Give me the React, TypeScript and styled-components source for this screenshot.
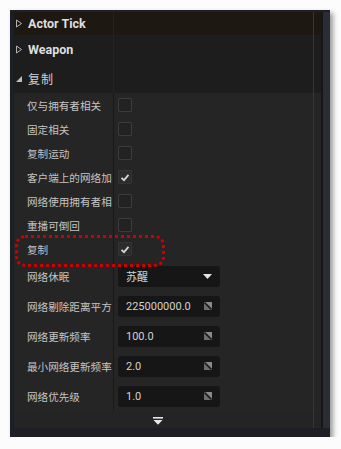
import React from 'react';
import styled, { createGlobalStyle, css } from 'styled-components';

const Global = createGlobalStyle`
  html, body { margin: 0; padding: 0; background: #fdfcfd; }
  body { font-family: "Roboto", "Noto Sans CJK SC", sans-serif; }
`;

// 分隔線 (label | value | scroll)
const dividers = (left: string) => css`
  background-image: linear-gradient(
    to right,
    transparent 99px, ${left} 99px, ${left} 100px, transparent 100px,
    transparent 299px, #363636 299px, #363636 300px, transparent 300px
  );
`;

const Page = styled.div`
  padding: 10px 0 0 10px;
`;

const Panel = styled.div`
  width: 320px;
  height: 427px;
  box-sizing: border-box;
  display: flex;
  border-left: 4px solid #1b1f27;
  border-top: 2px solid #1d2028;
  border-bottom: 9px solid #1d1f25;
  box-shadow: 3px 3px 5px rgba(0, 0, 0, 0.4);
  background: #252525;
`;

const Content = styled.div`
  flex: 1;
  display: flex;
  flex-direction: column;
  min-width: 0;
`;

const ScrollStrip = styled.div`
  width: 7px;
  border-left: 2px solid #141619;
  background: #2a2d35;
`;

const Category = styled.div<{ h: number; tone: 'hover' | 'plain' }>`
  height: ${(p) => p.h}px;
  display: flex;
  align-items: center;
  gap: 5px;
  padding-left: 1px;
  box-sizing: border-box;
  background-color: ${(p) => (p.tone === 'hover' ? '#1e1813' : '#1d1d1d')};
  ${dividers('#232323')}
`;

const CatTitle = styled.span<{ bold?: boolean }>`
  font-size: ${(p) => (p.bold ? '12.5px' : '12px')};
  font-weight: ${(p) => (p.bold ? 700 : 400)};
  color: ${(p) => (p.bold ? '#dedede' : '#d0d0d0')};
  letter-spacing: ${(p) => (p.bold ? '0' : '1px')};
`;

const PropRow = styled.div<{ h: number }>`
  position: relative;
  height: ${(p) => p.h}px;
  display: flex;
  align-items: center;
  background-color: #252525;
  ${dividers('#191919')}
`;

const Label = styled.div`
  width: 99px;
  flex: none;
  box-sizing: border-box;
  padding-left: 13px;
  font-size: 10.6px;
  color: #c4c4c4;
  white-space: nowrap;
  overflow: hidden;
`;

const Value = styled.div`
  flex: 1;
  display: flex;
  align-items: center;
  padding-left: 5px;
`;

const Check = styled.div<{ checked?: boolean }>`
  width: 14px;
  height: 14px;
  box-sizing: border-box;
  border: 1px solid ${(p) => (p.checked ? '#343434' : '#3b3b3b')};
  background: ${(p) => (p.checked ? '#2c2c2c' : '#222')};
  border-radius: 1px;
  display: flex;
  align-items: center;
  justify-content: center;
`;

const Field = styled.div`
  width: 102px;
  height: 21px;
  box-sizing: border-box;
  background: #161616;
  border-radius: 3px;
  display: flex;
  align-items: center;
  justify-content: space-between;
  padding: 0 8px 0 8px;
  font-size: 11px;
  color: #d2d2d2;
`;

const Highlight = styled.span`
  position: absolute;
  z-index: 2;
  left: 1px;
  top: -2px;
  width: 150px;
  height: 32px;
  box-sizing: border-box;
  border: 3px dotted #d10000;
  border-radius: 10px;
  pointer-events: none;
`;

const MoreRow = styled.div`
  flex: 1;
  display: flex;
  justify-content: center;
  padding: 6px 20px 0 0;
  box-sizing: border-box;
  background-color: #242424;
  background-image: linear-gradient(to right, transparent 299px, #363636 299px, #363636 300px, transparent 300px);
`;

const Collapsed = () => (
  <svg width="8" height="9" viewBox="0 0 8 9">
    <path d="M1.5 1 L6.5 4.5 L1.5 8 Z" fill="none" stroke="#b4b4b4" strokeWidth="1" />
  </svg>
);

const Expanded = () => (
  <svg width="8" height="8" viewBox="0 0 8 8">
    <path d="M7 1 L7 7 L1 7 Z" fill="#bdbdbd" />
  </svg>
);

const Tick = () => (
  <svg width="10" height="9" viewBox="0 0 10 9">
    <path d="M1.5 4.8 L4 7.2 L8.5 1.8" fill="none" stroke="#d4d4d4" strokeWidth="1.8" />
  </svg>
);

const ResizeIcon = () => (
  <svg width="8" height="8" viewBox="0 0 8 8">
    <rect x="0" y="0" width="8" height="8" fill="#6e6e6e" />
    <path d="M0 0 L8 8 L8 0 Z" fill="#8a8a8a" />
    <path d="M0.5 0.5 L7.5 7.5" stroke="#1a1a1a" strokeWidth="1.6" />
  </svg>
);

const DropArrow = () => (
  <svg width="9" height="5" viewBox="0 0 9 5">
    <path d="M0 0 L9 0 L4.5 5 Z" fill="#e6e6e6" />
  </svg>
);

const MoreArrow = () => (
  <svg width="10" height="8" viewBox="0 0 10 8">
    <rect x="0" y="0" width="10" height="1.6" fill="#e8e8e8" />
    <path d="M0.5 3 L9.5 3 L5 7.8 Z" fill="#e8e8e8" />
  </svg>
);

const checks: { label: string; checked?: boolean; mark?: boolean }[] = [
  { label: '仅与拥有者相关' },
  { label: '固定相关' },
  { label: '复制运动' },
  { label: '客户端上的网络加', checked: true },
  { label: '网络使用拥有者相' },
  { label: '重播可倒回' },
  { label: '复制', checked: true, mark: true },
];

const numbers = [
  { label: '网络剔除距离平方', value: '225000000.0' },
  { label: '网络更新频率', value: '100.0' },
  { label: '最小网络更新频率', value: '2.0' },
  { label: '网络优先级', value: '1.0' },
];

const App = () => {
  return (
    <Page>
      <Global />
      <Panel>
        <Content>
          <Category h={23} tone="hover">
            <Collapsed />
            <CatTitle bold>Actor Tick</CatTitle>
          </Category>
          <Category h={29} tone="plain">
            <Collapsed />
            <CatTitle bold>Weapon</CatTitle>
          </Category>
          <Category h={29} tone="plain">
            <Expanded />
            <CatTitle>复制</CatTitle>
          </Category>

          {checks.map((c) => (
            <PropRow h={24} key={c.label}>
              {c.mark && <Highlight />}
              <Label>{c.label}</Label>
              <Value>
                <Check checked={c.checked}>{c.checked && <Tick />}</Check>
              </Value>
            </PropRow>
          ))}

          <PropRow h={30}>
            <Label>网络休眠</Label>
            <Value>
              <Field>
                <span>苏醒</span>
                <DropArrow />
              </Field>
            </Value>
          </PropRow>

          {numbers.map((n) => (
            <PropRow h={30} key={n.label}>
              <Label>{n.label}</Label>
              <Value>
                <Field>
                  <span>{n.value}</span>
                  <ResizeIcon />
                </Field>
              </Value>
            </PropRow>
          ))}

          <MoreRow>
            <MoreArrow />
          </MoreRow>
        </Content>
        <ScrollStrip />
      </Panel>
    </Page>
  );
};

export default App;
